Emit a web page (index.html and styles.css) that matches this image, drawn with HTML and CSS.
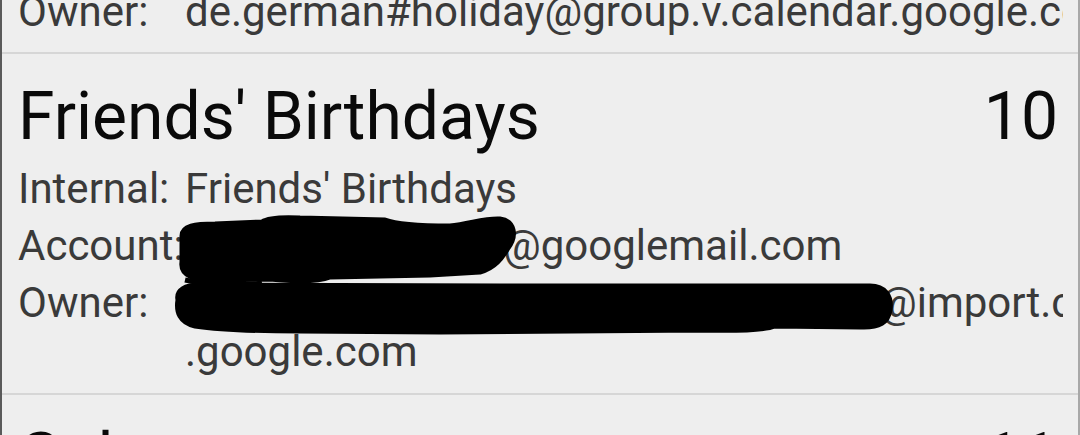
FILE: index.html
```html
<!DOCTYPE html>
<html lang="en">
<head>
    <meta charset="UTF-8">
    <meta name="viewport" content="width=device-width, initial-scale=1.0">
    <title>Calendars</title>
    <link rel="stylesheet" href="styles.css">
</head>
<body>
    <div class="screen">
        <div class="calendar-list">
            <!-- previous item, scrolled half out of view -->
            <div class="cal-item cal-item-cut">
                <div class="cal-details">
                    <div class="detail-row">
                        <span class="label">Owner:</span>
                        <span class="value clip">de.german#holiday@group.v.calendar.google.com</span>
                    </div>
                </div>
            </div>

            <div class="cal-item">
                <div class="cal-header">
                    <div class="cal-name">Friends' Birthdays</div>
                    <div class="cal-count">10</div>
                </div>
                <div class="cal-details">
                    <div class="detail-row">
                        <span class="label">Internal:</span>
                        <span class="value">Friends' Birthdays</span>
                    </div>
                    <div class="detail-row">
                        <span class="label">Account:</span>
                        <span class="value"><span class="hidden-part account-part"></span>@googlemail.com</span>
                    </div>
                    <div class="detail-row">
                        <span class="label">Owner:</span>
                        <span class="value">
                            <span class="clip-line"><span class="hidden-part owner-part"></span>@import.calendar</span>
                            <span class="clip-line">.google.com</span>
                        </span>
                    </div>
                </div>
                <!-- scribbled-out address -->
                <svg class="redact" viewBox="0 0 1080 341" width="1080" height="341">
                    <path d="M182,182 C182,172 195,170 215,170 L262,168 C268,164 280,163 300,164 L385,166 C395,170 420,172 450,172 C470,170 485,164 500,165 C515,167 517,182 508,194 C502,204 495,214 480,218 L430,221 L330,223 C320,227 300,228 270,225 L220,226 C195,227 180,222 182,208 Z"/>
                    <path d="M178,246 C176,236 185,231 200,231 L500,232 L870,232 C885,232 892,242 890,256 C888,268 880,274 860,273 L775,272 C765,276 740,277 700,276 L440,278 L300,277 C250,277 215,275 195,272 C180,269 176,258 178,246 Z"/>
                    <path d="M185,226 C210,232 250,231 262,229"/>
                </svg>
            </div>

            <div class="cal-item">
                <div class="cal-header">
                    <div class="cal-name">Geburtstage</div>
                    <div class="cal-count">11</div>
                </div>
            </div>
        </div>
    </div>
</body>
</html>
```

FILE: styles.css
```css
* { margin: 0; padding: 0; box-sizing: border-box; }

body {
    background: #eeeeee;
    font-family: Roboto, "Noto Sans", sans-serif;
    overflow: hidden;
}

.screen {
    width: 1080px;
    height: 435px;
    overflow: hidden;
    border-left: 2px solid #5a5a5a;
    border-right: 2px solid #a8a8a8;
    background: #eeeeee;
}

.calendar-list {
    margin-top: -13px;
}

.cal-item {
    position: relative;
    padding: 28px 20px 17px 16px;
    border-bottom: 2px solid #d6d6d6;
}

.cal-item-cut {
    padding-top: 0;
    padding-bottom: 16px;
}

.cal-header {
    display: flex;
    justify-content: space-between;
    align-items: baseline;
    font-size: 66px;
    line-height: 70px;
    color: #0a0a0a;
}

.cal-count {
    white-space: nowrap;
}

.cal-details {
    display: flex;
    flex-direction: column;
    gap: 8px;
    margin-top: 12px;
    margin-right: -5px;
    font-size: 42px;
    line-height: 49px;
    color: #3a3a3a;
}

.cal-item-cut .cal-details {
    margin-top: 0;
}

.detail-row {
    display: flex;
}

.label {
    flex: none;
    width: 167px;
    white-space: nowrap;
}

.value {
    flex: 1;
    min-width: 0;
}

.clip,
.clip-line {
    display: block;
    white-space: nowrap;
    overflow: hidden;
}

.hidden-part {
    display: inline-block;
}

.account-part {
    width: 318px;
}

.owner-part {
    width: 694px;
}

.redact {
    position: absolute;
    left: -2px;
    top: 0;
    fill: #000;
    stroke: #000;
    stroke-width: 5;
    stroke-linejoin: round;
}
```
